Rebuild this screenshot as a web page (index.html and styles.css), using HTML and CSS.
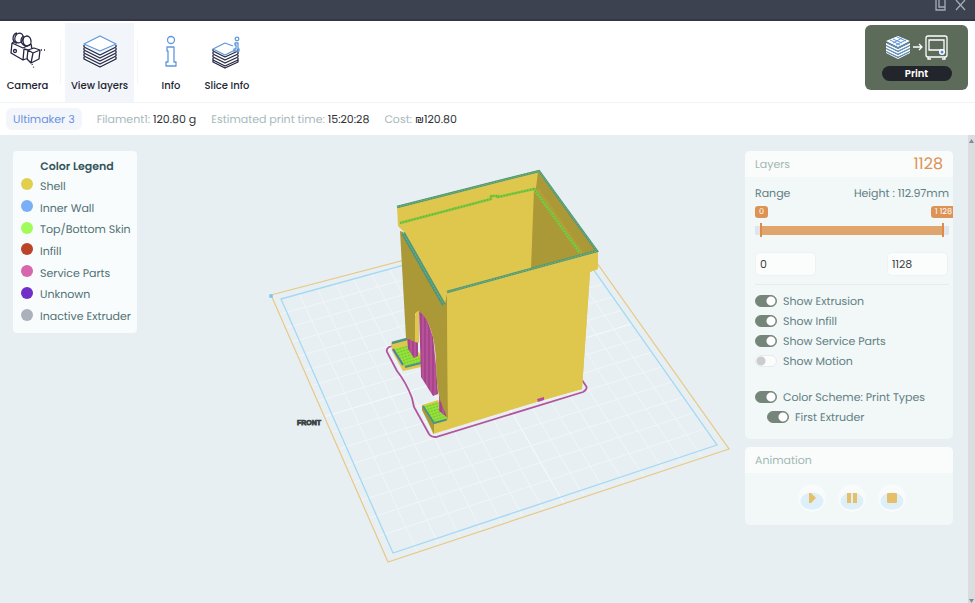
FILE: index.html
```html
<!DOCTYPE html>
<html lang="en">
<head>
<meta charset="utf-8">
<title>View layers</title>
<link rel="stylesheet" href="styles.css">
</head>
<body>
<header class="titlebar">
  <button class="win" aria-label="Restore"><svg width="11" height="11" viewBox="0 0 11 11"><path d="M1 0V10H10V0M4 0V7H10"/></svg></button>
  <button class="win" aria-label="Close"><svg width="11" height="11" viewBox="0 0 11 11"><path d="M1 0L10 10M10 0L1 10"/></svg></button>
</header>

<nav class="toolbar">
  <button class="tool camera">
    <svg width="38" height="38" viewBox="0 0 38 38" class="dark"><path d="M3 11L14 16 22 12 23 17M3 11L2 21 14 28 15 17M14 28L19 26M3 11L6 9M19 18L25 16 31 18 30 27 22 31 18 27ZM19 18L24 21 22 31M24 21L31 18M15 17L19 18"/><ellipse cx="10" cy="6" rx="4" ry="5" transform="rotate(20 10 6)"/><path d="M8 1Q4 2 4 7 5 11 8 11M15 4Q12 5 12 9 13 13 17 14"/><ellipse cx="18" cy="9" rx="4" ry="5" transform="rotate(-10 18 9)"/><circle cx="6" cy="19" r="1.500"/><path d="M32 18H37M23 32L25 36" stroke-dasharray="1 2"/></svg>
    <span>Camera</span>
  </button>
  <i class="sep"></i>
  <button class="tool layers active">
    <svg width="38" height="38" viewBox="0 0 38 38" class="dark"><path d="M3 13V15L19 23 35 15V13M3 16V18L19 26 35 18V16M3 19V21L19 29 35 21V19M3 22V24L19 32 35 24V22M3 25V27L19 35 35 27V25"/><path class="blue" fill="#fff" d="M19 4L35 12 19 19 3 12Z"/></svg>
    <span>View layers</span>
  </button>
  <i class="sep"></i>
  <button class="tool info">
    <svg width="38" height="38" viewBox="0 0 38 38" class="line"><circle cx="19" cy="8" r="3.500"/><path d="M15 15H22V30H24V34H14V30H16V19H15Z"/></svg>
    <span>Info</span>
  </button>
  <button class="tool slice">
    <svg width="38" height="38" viewBox="0 0 38 38" class="dark"><path d="M5 17V19L17 25 30 19V17M5 20V22L17 28 30 22V20M5 23V25L17 31 30 25V23M5 26V28L17 34 30 28V26M5 28V30L17 36 30 30V28"/><path class="blue" d="M17 11L5 17 17 23 27 18M17 11L25 14"/><g class="blue"><circle cx="29" cy="7" r="1.800"/><path d="M27 11H30V17H31V19H26V17H28V13H27Z"/></g></svg>
    <span>Slice Info</span>
  </button>
  <button class="print">
    <svg width="64" height="26" viewBox="0 0 64 26"><g class="stack"><path d="M13 2L25 7 13 13 1 7Z"/><path d="M1 9L13 15 25 9V11L13 17 1 11ZM1 12L13 18 25 12V14L13 20 1 14ZM1 15L13 21 25 15V17L13 23 1 17ZM1 18L13 24 25 18V19L13 25 1 19Z"/></g><path class="hatch" d="M8 5L17 9M12 3L21 7M17 4L8 9M5 6L15 11M21 6L11 11M2 9L13 14 24 9M2 12L13 17 24 12M2 15L13 20 24 15M2 18L13 23 24 18"/><path class="white" d="M28 13H37M34 10L37 13 34 16M41 4Q41 2 43 2H60Q62 2 62 4V21Q62 23 60 23H43Q41 23 41 21ZM44 6H59V16H44ZM43 23V25H46M60 23V25H57"/><circle cx="57" cy="18" r="3" fill="#fff"/><circle cx="57" cy="18" r="1.500" fill="#4b8be0"/></svg>
    <span>Print</span>
  </button>
</nav>

<section class="summary">
  <span class="printer">Ultimaker 3</span>
  <span>Filament1: <b>120.80 g</b></span>
  <span>Estimated print time: <b>15:20:28</b></span>
  <span>Cost: <b>₪120.80</b></span>
</section>

<main class="viewport">
  <svg class="scene" viewBox="0 135 968 468" preserveAspectRatio="xMidYMin meet" role="img" aria-label="Sliced model on the build plate">
    <defs>
      <pattern id="skin" width="3" height="3" patternUnits="userSpaceOnUse" patternTransform="rotate(-17)"><rect width="3" height="3" fill="#91df35"/><path d="M0 0H3" stroke="#64ae38"/><path d="M0 0V3" stroke="#a4ee43"/></pattern>
      <pattern id="support" width="4" height="10" patternUnits="userSpaceOnUse"><rect width="4" height="10" fill="#b9509a"/><path d="M1 0V10" stroke="#8f3b78"/></pattern>
    </defs>
    <path id="grid" class="grid"/>
    <path id="axis" class="axis"/>
    <path class="bed-outer" d="M271 295L565 218 729 449 388 562Z"/>
    <path class="bed-inner" d="M281 299L560 222 717 445 393 553Z"/>
    <circle cx="271" cy="296" r="2" fill="#7cc8ee"/>
    <text x="297" y="425" class="front">FRONT</text>

    <path class="skirt" d="M393 346L389 347Q386 349 387 352L397 371Q406 382 412 398L414 407 429 434Q431 437 436 437L583 392Q588 389 586 386L582 380"/>
    <path fill="#dfc64d" d="M391 343L407 338 421 355V367L403 371 392 351Z"/>
    <path fill="url(#skin)" d="M394 349L412 344 421 360V363L405 367Z"/>
    <path class="rim" d="M392 343L407 339"/><path class="wall" d="M393 349L403 365"/><path class="rim thin" d="M405 367L421 363"/>
    <path fill="#dfc64d" d="M422 405L438 400 449 420 582 389V388L433 434Z"/>
    <path fill="#ab9836" d="M422 405L434 424V434L422 410Z"/>
    <path fill="url(#skin)" d="M424 406L438 402 449 419 434 423Z"/>
    <path class="rim thin" d="M423 406L434 423 449 419"/>
    <path fill="url(#support)" d="M407 337L418 342V356L414 358 408 349Z"/>
    <path fill="url(#support)" d="M419 311L426 316 433 337 436 365 438 394 433 396 421 377Z"/>
    <path fill="url(#support)" d="M439 394L448 409V418L439 411Z"/>

    <path fill="#dfc64d" d="M397 206L539 170 598 252V269L590 272 582 389 447 427 444 304 404 232 398 226Z"/>
    <path fill="#ab9836" d="M538 172L597 251 531 269 534 189 536 188Z"/>
    <path fill="#b5a13c" d="M539 188L584 253 580 254 535 191Z" opacity=".6"/>
    <path fill="#ab9836" d="M400 231L403 232 445 304 447 294 448 420 440 400Q436 385 436 360 434 328 423 315 419 309 415 314L415 342 406 338Z"/>
    <path fill="#dfc64d" d="M415 342V316Q416 311 419 311V343Z"/>
    <path fill="#dfc64d" d="M447 292L598 251V269L590 272 582 389 448 427Z"/>
    <path class="edge-green" d="M400 223L491 199V196H498V197L534 189 580 253"/>
    <path class="edge-dots" d="M400 223L491 199V196H498V197L534 189 580 253"/>
    <path class="rim" d="M397 207L539 171 597 251 447 292"/>
    <path class="rim wide" d="M403 233L444 305"/>
    <path class="rim-light" d="M397 207L539 171 597 251 447 292M403 233L444 305"/>
    <path fill="#b84b9c" d="M537 399L544 397V400L538 402Z"/>
  </svg>

  <div class="overlay">
    <section class="legend">
      <h2>Color Legend</h2>
      <ul>
        <li><i class="shell"></i>Shell</li>
        <li><i class="inner"></i>Inner Wall</li>
        <li><i class="skin"></i>Top/Bottom Skin</li>
        <li><i class="infill"></i>Infill</li>
        <li><i class="service"></i>Service Parts</li>
        <li><i class="unknown"></i>Unknown</li>
        <li><i class="inactive"></i>Inactive Extruder</li>
      </ul>
    </section>

    <aside class="side">
      <section class="panel">
        <header><h2>Layers</h2><strong>1128</strong></header>
        <div class="body">
          <div class="row"><span>Range</span><span>Height : 112.97mm</span></div>
          <div class="row bubbles"><output>0</output><output>1 128</output></div>
          <div class="slider">
            <input type="range" min="0" max="1128" value="0" aria-label="First layer">
            <input type="range" min="0" max="1128" value="1128" aria-label="Last layer">
          </div>
          <div class="row fields"><input type="text" value="0" aria-label="From layer"><input type="text" value="1128" aria-label="To layer"></div>
          <hr>
          <label><input type="checkbox" checked>Show Extrusion</label>
          <label><input type="checkbox" checked>Show Infill</label>
          <label><input type="checkbox" checked>Show Service Parts</label>
          <label><input type="checkbox">Show Motion</label>
          <label class="group"><input type="checkbox" checked>Color Scheme: Print Types</label>
          <label class="nested"><input type="checkbox" checked>First Extruder</label>
        </div>
      </section>
      <section class="panel">
        <header><h2>Animation</h2></header>
        <div class="player">
          <button aria-label="Play"><svg width="12" height="12" viewBox="0 0 12 12"><path d="M3 1H5L10 6 5 11H3Z"/></svg></button>
          <button aria-label="Pause"><svg width="12" height="12" viewBox="0 0 12 12"><path d="M1 1H5V11H1ZM7 1H11V11H7Z"/></svg></button>
          <button aria-label="Stop"><svg width="12" height="12" viewBox="0 0 12 12"><rect x="1" y="1" width="10" height="10" rx="1"/></svg></button>
        </div>
      </section>
    </aside>
  </div>
  <div class="scrollbar"><svg width="5" height="4" viewBox="0 0 5 4"><path d="M0 4L2.500 0 5 4Z"/></svg><svg width="5" height="4" viewBox="0 0 5 4"><path d="M0 0L2.500 4 5 0Z"/></svg></div>
</main>
<script src="scene.js"></script>
</body>
</html>
```
FILE: styles.css
```css
* { box-sizing: border-box; }
body {
  margin: 0;
  min-height: 100vh;
  display: flex;
  flex-direction: column;
  background: #fff;
  color: #5f8084;
  font: 11px/16px Poppins, Inter, "Liberation Sans", sans-serif;
  text-rendering: geometricPrecision;
}
button { font: inherit; color: inherit; border: 0; padding: 0; background: none; }
h2, ul { margin: 0; padding: 0; }
svg { display: block; }

.titlebar {
  height: 21px;
  background: #3d4250;
  border-bottom: 2px solid #343545;
  display: flex;
  justify-content: flex-end;
  gap: 9px;
  padding-right: 9px;
}
.win { align-self: flex-start; }
.win svg { fill: none; stroke: #a8abb3; stroke-width: 1.3; }

.toolbar {
  display: flex;
  height: 82px;
  padding-top: 2px;
  border-bottom: 1px solid #f1f4f5;
}
.tool {
  display: flex;
  flex-direction: column;
  align-items: center;
  padding-top: 9px;
  gap: 8px;
  width: 70px;
  color: #222432;
  font-size: 10px;
  font-weight: 500;
  white-space: nowrap;
}
.tool svg { fill: none; stroke-width: 1.3; stroke-linejoin: round; }
.camera { width: 55px; }
.layers { width: 69px; }
.info { width: 50px; margin-left: 8px; }
.slice { width: 62px; }
.active { background: #f2f6fa; }
.dark { stroke: #252642; }
.blue, .line { stroke: #6197dc; }
.sep { width: 1px; height: 44px; margin: 17px 4px 0 5px; background: #f4f5f6; }
.active + .sep { margin: 17px 0 0 3px; }
.print {
  align-self: flex-start;
  margin: 2px 7px 0 auto;
  width: 103px;
  height: 65px;
  border-radius: 6px;
  background: #5c6b5a;
  display: flex;
  flex-direction: column;
  align-items: center;
  justify-content: center;
  gap: 6px;
}
.print span {
  width: 70px;
  border-radius: 8px;
  background: #22252c;
  color: #fff;
  font-size: 10px;
  line-height: 15px;
  font-weight: 600;
}
.stack { fill: #fff; }
.hatch { fill: none; stroke: #5b97df; }
.white { fill: none; stroke: #fff; stroke-width: 1.3; }

.summary {
  height: 32px;
  display: flex;
  align-items: center;
  gap: 15px;
  padding-left: 6px;
  color: #a6b9bb;
  white-space: nowrap;
}
.summary b { color: #303437; font-weight: 400; }
.summary .printer {
  padding: 3px 7px;
  border-radius: 6px;
  background: #f2f6fb;
  color: #6b90e0;
}

.viewport {
  flex: 1;
  display: grid;
  grid-template-columns: 1fr 7px;
  background: #e7eff3;
}
.scene { grid-area: 1 / 1; width: 100%; }
.grid, .axis { fill: none; stroke: #f1f6f8; }
.axis { stroke: #f4f9fb; }
.bed-outer { fill: none; stroke: #e7c984; stroke-width: 1.2; }
.bed-inner { fill: none; stroke: #a2d9f3; stroke-width: 1.3; }
.front { font: 700 7px "Liberation Sans", sans-serif; fill: #4a5254; stroke: #3b4345; stroke-width: .8; }
.skirt { fill: none; stroke: #b2559d; stroke-width: 1.8; }
.rim { fill: none; stroke: #4d9484; stroke-width: 2.4; }
.rim.wide { stroke-width: 4; }
.rim.thin { stroke-width: 2; }
.rim-light { fill: none; stroke: #79bd55; stroke-dasharray: 2 1; }
.wall { stroke: #477fae; stroke-width: 2; }
.edge-green { fill: none; stroke: #83c83c; stroke-width: 2.6; }
.edge-dots { fill: none; stroke: #5fb04a; stroke-width: 1.6; stroke-dasharray: 1 2; }

.overlay {
  grid-area: 1 / 1;
  z-index: 1;
  display: flex;
  justify-content: space-between;
  align-items: flex-start;
  padding: 16px 15px 16px 13px;
}
.legend {
  background: #f9fcfc;
  border-radius: 4px;
  padding: 8px 4px 6px 8px;
  width: 124px;
  color: #507075;
  white-space: nowrap;
}
.legend h2 { font-size: 11px; line-height: 14px; text-align: center; color: #34565d; font-weight: 600; }
.legend ul { list-style: none; display: grid; height: 152px; margin-top: 2px; }
.legend li { display: flex; align-items: center; gap: 7px; }
.legend i { flex: none; width: 12px; height: 12px; border-radius: 50%; margin-bottom: 3px; }
.shell { background: #e0d04e; }
.inner { background: #7aaff5; }
.skin { background: #a1fb59; }
.infill { background: #bb4328; }
.service { background: #d766ac; }
.unknown { background: #702fc6; }
.inactive { background: #abb1ba; }

.side { width: 208px; display: flex; flex-direction: column; gap: 8px; }
.panel { border-radius: 5px; background: #f2f7f7; overflow: hidden; }
.panel header {
  height: 26px;
  display: flex;
  align-items: center;
  justify-content: space-between;
  padding: 0 10px;
  background: #fafcfc;
}
.panel h2 { font-size: 11px; font-weight: 400; color: #a0b8b2; }
.panel strong { font-size: 16px; font-weight: 400; color: #dd9354; }
.body { padding: 8px 4px 12px 10px; }
.row { display: flex; justify-content: space-between; }
.bubbles { margin: 5px -4px 0 0; height: 12px; }
output {
  background: #dd9354;
  color: #fff;
  border-radius: 3px;
  padding: 0 4px;
  font-size: 8px;
  line-height: 12px;
}
output + output { padding: 0 1px 0 4px; border-radius: 3px 0 0 3px; }
.slider {
  display: grid;
  margin: 5px 0 0;
  padding: 0 5px;
  height: 14px;
  background: linear-gradient(90deg, #e2e4ec 6px, #dfa56c 6px calc(100% - 6px), #e2e4ec calc(100% - 6px)) center / 100% 9px no-repeat;
}
.slider input {
  grid-area: 1 / 1;
  appearance: none;
  width: 100%;
  margin: 0;
  background: none;
}
.slider input::-webkit-slider-thumb { appearance: none; width: 2px; height: 14px; background: #dd8b47; }
.fields { margin: 15px 0 8px; padding-right: 1px; }
.fields input {
  width: 61px;
  height: 24px;
  border: 1px solid #edf2f2;
  border-radius: 5px;
  background: #fbfcfc;
  padding: 0 4px;
  font: inherit;
  color: #3c4244;
}
hr { border: 0; height: 1px; margin: 0 0 6px; background: #e5ecec; }
.body label { display: flex; align-items: center; gap: 6px; height: 20px; white-space: nowrap; }
.body .group { margin-top: 16px; }
.body .nested { padding-left: 12px; }
[type="checkbox"] {
  appearance: none;
  width: 22px;
  height: 12px;
  margin: 0;
  border: 1px solid #e7ebea;
  border-radius: 6px;
  background: radial-gradient(circle at 5px 5px, #cacdcc 4px, #fbfcfc 5px);
}
[type="checkbox"]:checked {
  border-color: #75857a;
  background: radial-gradient(circle at 15px 5px, #fff 4px, #75857a 5px);
}
.player { display: flex; justify-content: center; gap: 12px; padding: 11px 0 13px 6px; }
.player button {
  width: 28px;
  height: 28px;
  border: 1px solid #f8fbfb;
  border-radius: 50%;
  display: grid;
  place-items: center;
  background: radial-gradient(ellipse 12px 9px at 50% 62%, #ddf0fa 90%, #f9fbfb 100%);
}
.player svg { fill: #e6bf67; }
.scrollbar {
  grid-area: 1 / 2;
  background: #d9dddf;
  display: flex;
  flex-direction: column;
  justify-content: space-between;
  align-items: center;
  padding: 4px 0 0;
}
.scrollbar svg { fill: #858a8c; }
```
FILE: scene.js
```js
// Projects the build plate's square grid into the perspective of the scene.
const [a, b, c, d] = [[281, 299], [560, 222], [717, 445], [393, 553]];
const cells = 16;
const dx1 = b[0] - c[0], dx2 = d[0] - c[0], sx = a[0] - b[0] + c[0] - d[0];
const dy1 = b[1] - c[1], dy2 = d[1] - c[1], sy = a[1] - b[1] + c[1] - d[1];
const det = dx1 * dy2 - dx2 * dy1;
const g = (sx * dy2 - dx2 * sy) / det;
const h = (dx1 * sy - sx * dy1) / det;

function project(u, v) {
  const w = g * u + h * v + 1;
  const axis = i => ((b[i] - a[i] + g * b[i]) * u + (d[i] - a[i] + h * d[i]) * v + a[i]) / w;
  return axis(0).toFixed(1) + " " + axis(1).toFixed(1);
}
function cross(t) {
  return `M${project(t, 0)}L${project(t, 1.02)}M${project(-0.02, t)}L${project(1, t)}`;
}

let lines = "";
for (let i = 1; i < cells; i++) lines += cross(i / cells);
document.getElementById("grid").setAttribute("d", lines);
document.getElementById("axis").setAttribute("d", cross(0.5));
```
